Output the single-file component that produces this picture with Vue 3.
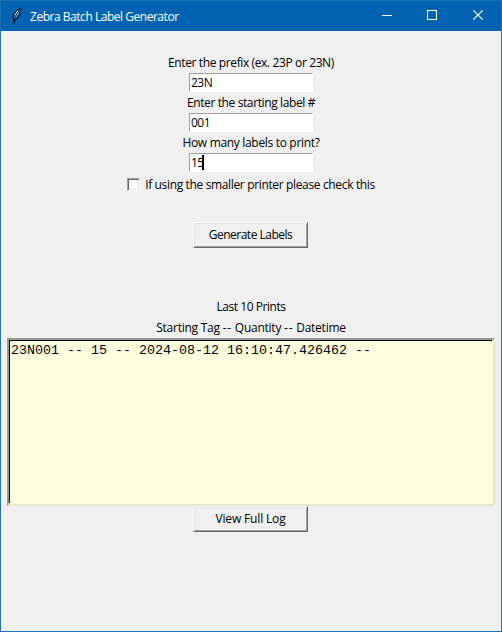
<script setup>
import { ref } from 'vue'

const fields = ref([
  { id: 'prefix', label: 'Enter the prefix (ex. 23P or 23N)', value: '23N', fit: 'fit-prefix' },
  { id: 'start', label: 'Enter the starting label #', value: '001', fit: 'fit-start' },
  { id: 'count', label: 'How many labels to print?', value: '15', fit: 'fit-count', caret: true },
])
const log = ref(['23N001 -- 15 -- 2024-08-12 16:10:47.426462 --'])
</script>

<template>
  <div class="window">
    <header class="titlebar">
      <svg class="feather" width="12" height="17" viewBox="0 0 12 17">
        <path d="M2.5 15.5 L3 12 C0.8 8 5 2 9 0.8 C10 4.5 7.5 9.5 3.8 12.2" fill="#7db4ea" stroke="#05101f" stroke-width="1.3" />
        <path d="M2.7 15.8 C3.2 10.5 5 6.5 7.6 3.2" fill="none" stroke="#05101f" stroke-width="1" />
        <path d="M4.2 6.5 L6.6 2.8" stroke="#dcecff" stroke-width="1" />
      </svg>
      <span class="title"><span class="fit-title">Zebra Batch Label Generator</span></span>
      <svg class="ctl" width="45" height="30" viewBox="0 0 45 30"><path d="M18 14.5h10" stroke="#fff" /></svg>
      <svg class="ctl" width="46" height="30" viewBox="0 0 46 30"><rect x="18.5" y="9.5" width="9" height="9" fill="none" stroke="#fff" /></svg>
      <svg class="ctl" width="46" height="30" viewBox="0 0 46 30"><path d="M18.3 9.3l9.4 9.4M27.7 9.3l-9.4 9.4" stroke="#fff" stroke-width="1.2" /></svg>
    </header>
    <main class="body">
      <template v-for="f in fields" :key="f.id">
        <label class="label"><span :class="f.fit">{{ f.label }}</span></label>
        <div class="entry"><span class="value">{{ f.value }}</span><i v-if="f.caret" class="caret"></i></div>
      </template>
      <div class="check">
        <span class="box"></span>
        <span class="fit-check">If using the smaller printer please check this</span>
      </div>
      <div class="btn generate"><span class="fit-generate">Generate Labels</span></div>
      <div class="label last"><span class="fit-last">Last 10 Prints</span></div>
      <div class="label"><span class="fit-cols">Starting Tag <b class="dash">--</b> Quantity <b class="dash">--</b> Datetime</span></div>
      <div class="list">
        <div class="inner">
          <div v-for="row in log" :key="row" class="row">{{ row }}</div>
        </div>
      </div>
      <div class="btn"><span class="fit-view">View Full Log</span></div>
    </main>
  </div>
</template>

<style>
body { margin: 0; overflow: hidden; }
</style>

<style scoped>
.window {
  box-sizing: border-box;
  width: 502px;
  height: 632px;
  border: 1px solid #1c70b3;
  background: #f0f0f0;
  font-family: "Open Sans", "Noto Sans", sans-serif;
  font-size: 12px;
  line-height: 21px;
  color: #000;
  white-space: nowrap;
}
.titlebar {
  display: flex;
  align-items: center;
  height: 30px;
  background: #0063b1;
  color: #fff;
}
.feather { margin-left: 10px; }
.title { flex: 1; margin-left: 7px; }
.ctl { flex: none; }
.body {
  display: flex;
  flex-direction: column;
  align-items: center;
  padding-top: 21px;
}
.label { height: 21px; display: flex; justify-content: center; }
.entry {
  box-sizing: border-box;
  display: flex;
  align-items: center;
  width: 124px;
  height: 19px;
  padding-left: 1px;
  border: 1px solid #fff;
  border-top-color: #a0a0a0;
  border-left-color: #a0a0a0;
  background: #fff;
}
.value { letter-spacing: -0.5px; }
.caret { width: 2px; height: 15px; margin-left: -2px; background: #000; }
.check {
  display: flex;
  align-items: center;
  gap: 5px;
  height: 25px;
}
.box {
  box-sizing: border-box;
  width: 13px;
  height: 13px;
  border: 1px solid #fff;
  border-top-color: #a0a0a0;
  border-left-color: #a0a0a0;
  background: #fff;
  box-shadow: inset 1px 1px #696969, inset -1px -1px #e3e3e3;
}
.btn {
  box-sizing: border-box;
  display: flex;
  align-items: center;
  justify-content: center;
  width: 115px;
  height: 26px;
  margin-right: 1px;
  padding-bottom: 1px;
  border: 1px solid #696969;
  border-top-color: #fff;
  border-left-color: #fff;
  box-shadow: inset 1px 1px #e3e3e3, inset -1px -1px #a0a0a0;
}
.generate { margin-top: 25px; }
.last { margin-top: 48px; }
.list {
  box-sizing: border-box;
  width: 488px;
  height: 168px;
  border: 2px solid #e6e6c8;
  border-top-color: #9a9a86;
  border-left-color: #9a9a86;
  background: #ffffe0;
}
.inner {
  box-sizing: border-box;
  width: 483px;
  height: 163px;
  border-top: 1px solid #000;
  border-left: 1px solid #000;
  padding: 1px;
}
.row {
  font-family: "Liberation Mono", monospace;
  font-size: 13.33px;
  line-height: 17px;
}
.dash { font-weight: 400; letter-spacing: 0.8px; }
.fit-title { letter-spacing: -0.47px; }
.fit-prefix { letter-spacing: -0.38px; }
.fit-start { letter-spacing: -0.38px; }
.fit-count { letter-spacing: -0.32px; }
.fit-check { letter-spacing: -0.35px; }
.fit-generate { letter-spacing: -0.5px; }
.fit-last { letter-spacing: -0.45px; }
.fit-cols { letter-spacing: -0.25px; }
.fit-view { letter-spacing: -0.15px; }
</style>
